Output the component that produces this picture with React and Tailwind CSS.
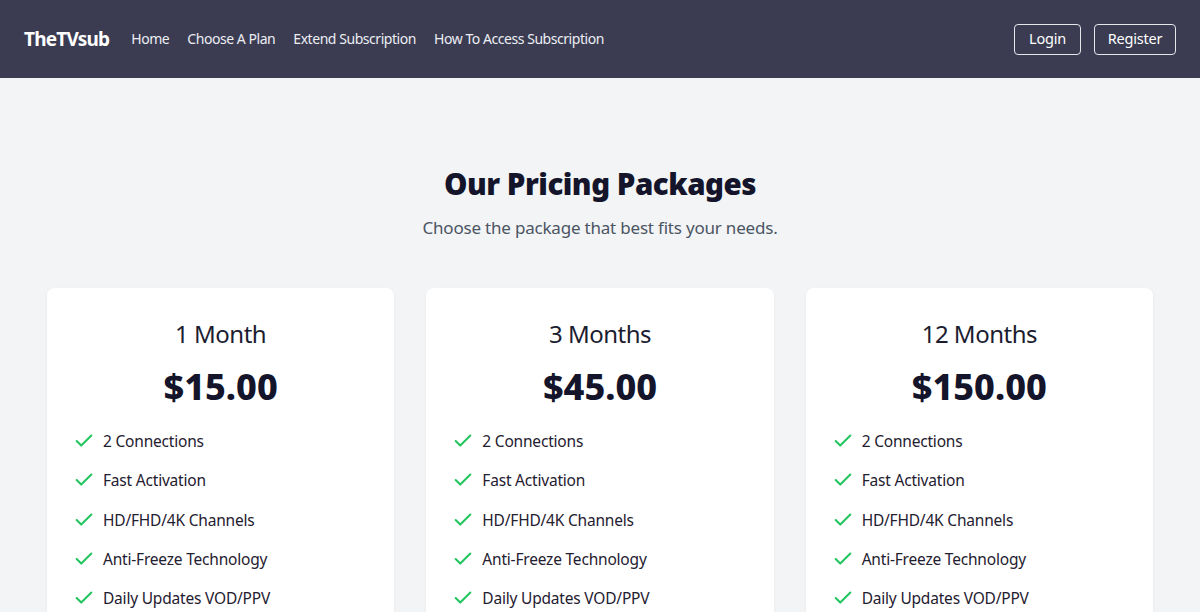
import { Check } from "lucide-react";

const navLinks = ["Home", "Choose A Plan", "Extend Subscription", "How To Access Subscription"];

const features = [
    "2 Connections",
    "Fast Activation",
    "HD/FHD/4K Channels",
    "Anti-Freeze Technology",
    "Daily Updates VOD/PPV",
];

const plans = [
    { name: "1 Month", price: "$15.00" },
    { name: "3 Months", price: "$45.00" },
    { name: "12 Months", price: "$150.00" },
];

const PlanCard = ({ plan }) => (
    <div className="bg-white rounded-lg shadow-[0_1px_3px_rgba(0,0,0,0.06)] pt-[30px] px-[26px] pb-8">
        <h3 className="text-center text-[24px] leading-[32px] tracking-[-0.5px] text-[#1c1c30]">{plan.name}</h3>
        <p className="text-center text-[36px] leading-[44px] font-extrabold text-[#14142b] mt-[15px]">{plan.price}</p>
        <ul className="mt-[20px] flex flex-col gap-[15.25px]">
            {features.map((f) => (
                <li key={f} className="flex items-center gap-[8px] text-[15.5px] leading-[24px] tracking-[-0.2px] text-[#1f2030]">
                    <Check className="w-[22px] h-[22px] text-[#22c55e] shrink-0" strokeWidth={2.2} />
                    {f}
                </li>
            ))}
        </ul>
    </div>
);

export default function App() {
    return (
        <div className="min-h-screen bg-[#f3f4f6]" style={{ fontFamily: '"Noto Sans", "Open Sans", sans-serif' }}>
            {/* Header */}
            <header className="h-[78px] bg-[#3b3c52] flex items-center justify-between px-6">
                <div className="flex items-center">
                    <span className="text-white text-[19px] font-bold mr-[22px] tracking-[-0.8px]">TheTVsub</span>
                    <nav className="flex items-center gap-[18px] -mt-[2px]">
                        {navLinks.map((l) => (
                            <a key={l} href="#" className="text-[#eceef2] text-[14px] tracking-[-0.45px]">{l}</a>
                        ))}
                    </nav>
                </div>
                <div className="flex items-center gap-[13px]">
                    <button className="h-[31px] w-[67px] border border-[#e5e7eb] rounded text-white text-[14.5px] tracking-[-0.2px]">Login</button>
                    <button className="h-[31px] w-[82px] border border-[#e5e7eb] rounded text-white text-[14.5px] tracking-[-0.2px]">Register</button>
                </div>
            </header>

            {/* Pricing */}
            <section className="px-[47px] pt-[88px]">
                <h2 className="text-center text-[29.5px] leading-[36px] font-black tracking-[-0.5px] text-[#14142b]">Our Pricing Packages</h2>
                <p className="text-center text-[17px] leading-[28px] tracking-[-0.2px] text-[#4b5563] mt-[12px]">Choose the package that best fits your needs.</p>
                <div className="grid grid-cols-3 gap-8 mt-[46px]">
                    {plans.map((p) => (
                        <PlanCard key={p.name} plan={p} />
                    ))}
                </div>
            </section>
        </div>
    );
}
